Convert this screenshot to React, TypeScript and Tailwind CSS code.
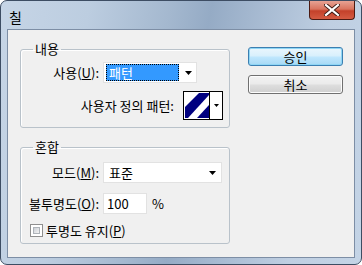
import React from "react";

const font = { fontFamily: '"Noto Sans CJK KR", "Noto Sans", sans-serif' };

function Arrow() {
  return (
    <svg width="7" height="4" viewBox="0 0 7 4" className="block">
      <polygon points="0,0 7,0 3.5,4" fill="#000" />
    </svg>
  );
}

export default function App() {
  return (
    <div
      className="w-[362px] h-[265px] flex flex-col rounded-[7px] border border-[#3d4d63] overflow-hidden text-[13px] leading-[15px] text-black"
      style={{
        ...font,
        background:
          "linear-gradient(100deg, #c6d5e6 0%, #bccde0 22%, #a4b8cf 42%, #95abc5 52%, #a9bcd3 66%, #bfcfe2 82%, #c4d4e6 100%)",
      }}
    >
      {/* title bar */}
      <div className="h-[28px] flex items-start justify-between pl-[8px] pr-[6px]">
        <span className="mt-[8px] text-[14px] leading-[16px]">칠</span>
        <div className="w-[46px] h-[19px] rounded-b-[4px] border border-t-0 border-[#4b1a12] bg-[linear-gradient(#e7a293_0%,#d9745f_45%,#c4412a_55%,#d45b42_100%)] flex items-center justify-center">
          <svg width="16" height="12" viewBox="0 0 16 12">
            <path d="M2 1 L14 11 M14 1 L2 11" stroke="#3a1a14" strokeWidth="4" strokeLinecap="square" />
            <path d="M2 1 L14 11 M14 1 L2 11" stroke="#ffffff" strokeWidth="2.2" strokeLinecap="square" />
          </svg>
        </div>
      </div>

      {/* body */}
      <div className="flex-1 flex px-[6px] pb-[6px]">
        <div className="flex-1 bg-[#f0f0f0] border border-[#7d8ea5] flex pl-[12px] pt-[12px]">
          {/* left column */}
          <div className="flex flex-col gap-[12px] w-[210px]">
            <fieldset className="border border-[#b9c2ca] rounded-[3px] pb-[7px] shadow-[inset_1px_1px_0_#fff]">
              <legend className="ml-[12px] px-[2px] h-[14px] leading-[14px]">내용</legend>
              <div className="flex items-center mt-[6px] h-[21px]">
                <span className="w-[78px] text-right">
                  사용(<span className="underline">U</span>):
                </span>
                <div className="ml-[4px] w-[94px] h-[21px] bg-white border border-[#e2e2e2] flex items-center pl-[2px] pr-[4px]">
                  <div className="w-[73px] h-[17px] bg-[#3399ff] border border-dotted border-black text-white flex items-center pl-[2px]">
                    패턴
                  </div>
                  <div className="flex-1 flex justify-end">
                    <Arrow />
                  </div>
                </div>
              </div>
              <div className="flex items-center mt-[8px] h-[29px]">
                <span className="w-[153px] text-right">사용자 정의 패턴:</span>
                <div className="ml-[9px] w-[40px] h-[29px] border border-black bg-white flex">
                  <div className="w-[26px] h-full border-r border-black p-[1px]">
                    <svg width="24" height="25" viewBox="0 0 24 25" className="block">
                      <rect width="24" height="25" fill="#ffffff" />
                      <polygon points="0,25 0,14 14,0 24,0 24,2 3,25" fill="#000080" />
                      <polygon points="12,25 24,12 24,25" fill="#000080" />
                    </svg>
                  </div>
                  <div className="flex-1 flex items-center justify-center">
                    <svg width="5" height="3" viewBox="0 0 5 3" className="block">
                      <polygon points="0,0 5,0 2.5,3" fill="#000" />
                    </svg>
                  </div>
                </div>
              </div>
            </fieldset>

            <fieldset className="border border-[#b9c2ca] rounded-[3px] pb-[5px] shadow-[inset_1px_1px_0_#fff]">
              <legend className="ml-[12px] px-[2px] h-[14px] leading-[14px]">혼합</legend>
              <div className="flex items-center mt-[8px] h-[21px]">
                <span className="w-[78px] text-right">
                  모드(<span className="underline">M</span>):
                </span>
                <div className="ml-[4px] w-[119px] h-[21px] bg-white border border-[#e2e2e2] flex items-center pl-[5px] pr-[5px]">
                  <span>표준</span>
                  <div className="flex-1 flex justify-end">
                    <Arrow />
                  </div>
                </div>
              </div>
              <div className="flex items-center mt-[10px] h-[21px]">
                <span className="w-[78px] text-right">
                  불투명도(<span className="underline">O</span>):
                </span>
                <div className="ml-[4px] w-[44px] h-[21px] bg-white border border-[#e2e2e2] flex items-center pl-[3px]">
                  100
                </div>
                <span className="ml-[5px]">%</span>
              </div>
              <div className="flex items-center mt-[9px] h-[15px] pl-[9px]">
                <div className="w-[13px] h-[13px] border border-[#8f8f8f] bg-white p-[2px]">
                  <div className="w-full h-full bg-[linear-gradient(135deg,#cbcfd5,#f4f4f4)] border border-[#aeb3b9]" />
                </div>
                <span className="ml-[3px]">
                  투명도 유지(<span className="underline">P</span>)
                </span>
              </div>
            </fieldset>
          </div>

          {/* right column */}
          <div className="ml-[18px] mt-[5px] flex flex-col gap-[9px] w-[95px]">
            <div className="h-[19px] rounded-[3px] border border-[#3c7fb1] bg-[linear-gradient(#eaf6fd_0%,#d9f0fc_45%,#bee6fd_55%,#a7d9f5_100%)] shadow-[inset_0_0_0_1px_#8fd6f5] flex items-center justify-center">
              승인
            </div>
            <div className="h-[19px] rounded-[3px] border border-[#707070] bg-[linear-gradient(#f2f2f2_0%,#ebebeb_45%,#dddddd_55%,#cfcfcf_100%)] shadow-[inset_0_0_0_1px_#fcfcfc] flex items-center justify-center">
              취소
            </div>
          </div>
        </div>
      </div>
    </div>
  );
}
